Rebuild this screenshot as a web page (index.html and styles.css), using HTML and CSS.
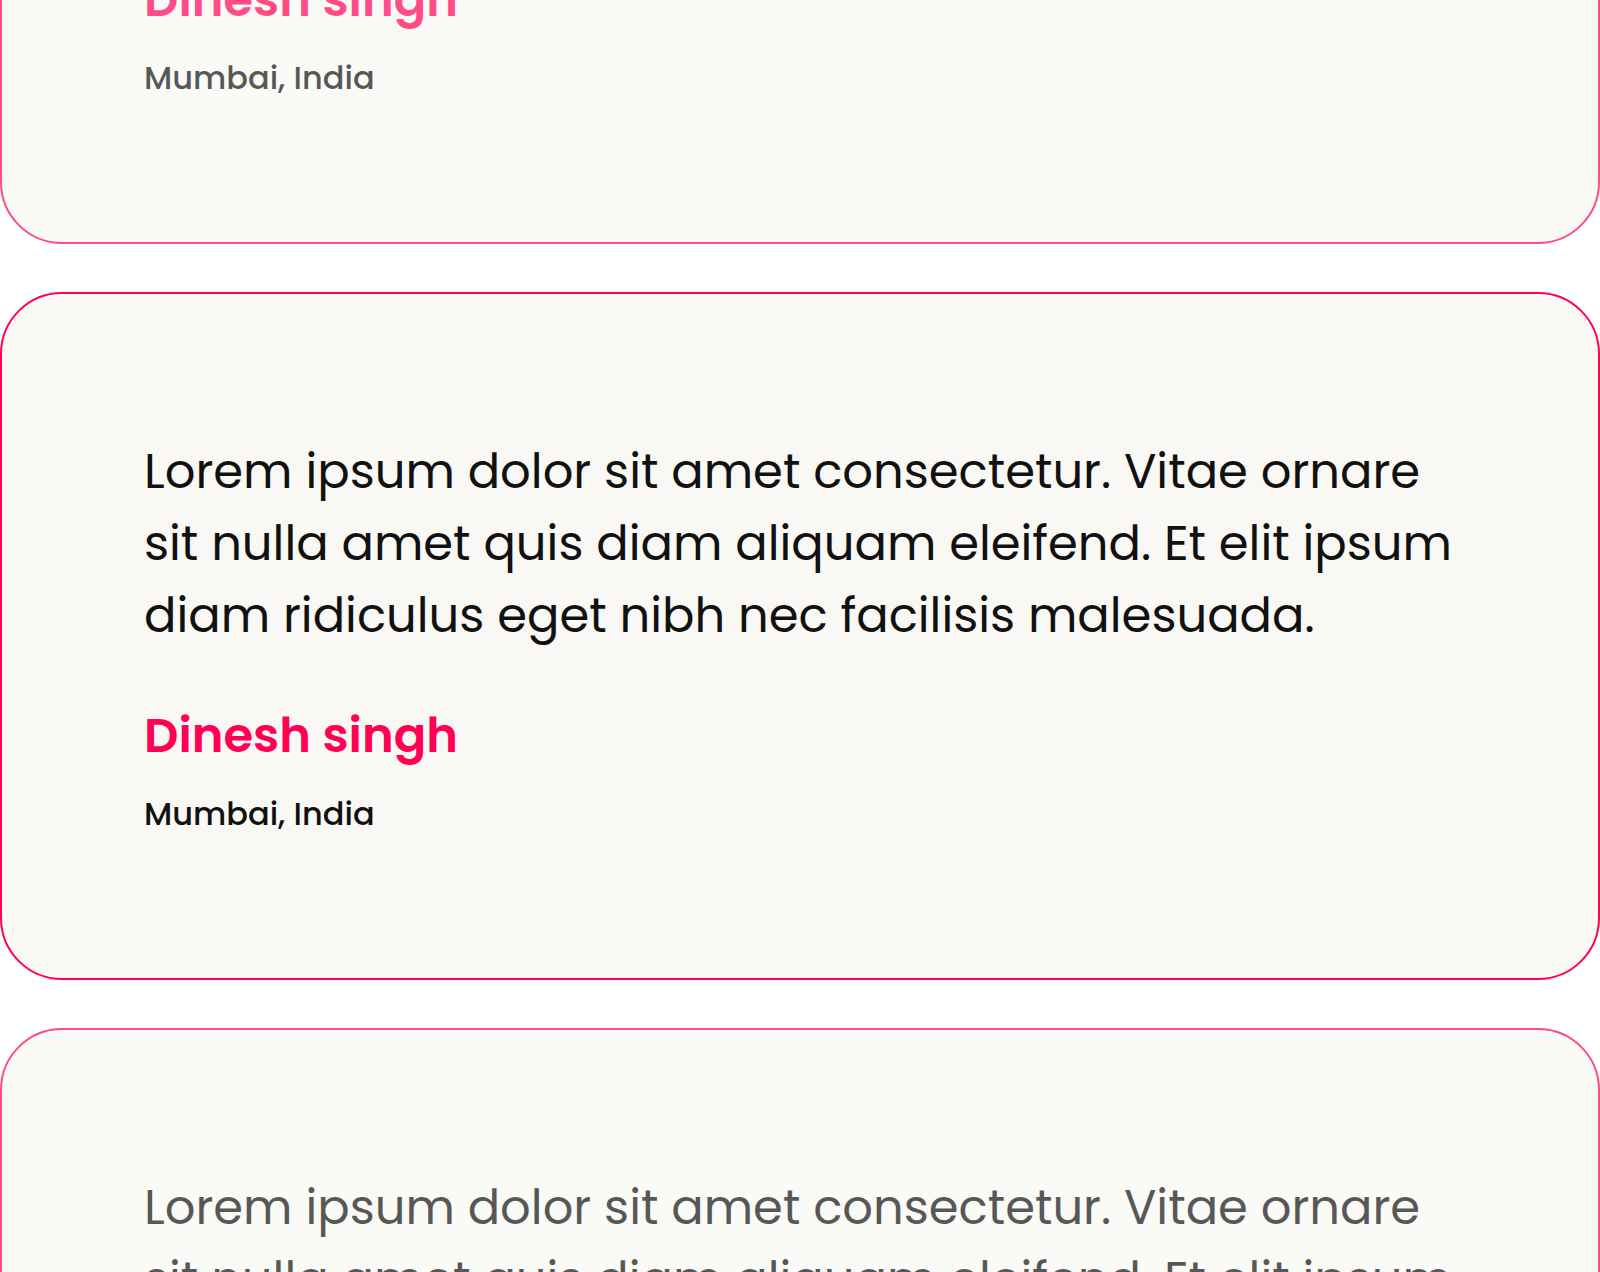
FILE: index.html
```html
<!DOCTYPE html>
<html lang="en">
<head>
<meta charset="utf-8">
<title>Testimonials</title>
<link rel="stylesheet" href="styles.css">
</head>
<body>
<section class="testimonials">
  <div class="track">
    <article class="card card-dim">
      <p class="quote">Lorem ipsum dolor sit amet consectetur. Vitae ornare sit nulla amet quis diam aliquam eleifend. Et elit ipsum diam ridiculus eget nibh nec facilisis malesuada.</p>
      <h3 class="name">Dinesh singh</h3>
      <p class="place">Mumbai, India</p>
    </article>
    <article class="card">
      <p class="quote">Lorem ipsum dolor sit amet consectetur. Vitae ornare sit nulla amet quis diam aliquam eleifend. Et elit ipsum diam ridiculus eget nibh nec facilisis malesuada.</p>
      <h3 class="name">Dinesh singh</h3>
      <p class="place">Mumbai, India</p>
    </article>
    <article class="card card-dim">
      <p class="quote">Lorem ipsum dolor sit amet consectetur. Vitae ornare sit nulla amet quis diam aliquam eleifend. Et elit ipsum diam ridiculus eget nibh nec facilisis malesuada.</p>
      <h3 class="name">Dinesh singh</h3>
      <p class="place">Mumbai, India</p>
    </article>
  </div>
</section>
</body>
</html>
```
FILE: styles.css
```css
html, body {
  margin: 0;
  padding: 0;
  background: #ffffff;
}

body {
  font-family: "Poppins", "Open Sans", "Liberation Sans", sans-serif;
  color: #111111;
  overflow: hidden;
}

.testimonials {
  height: 1272px;
  overflow: hidden;
}

.track {
  display: flex;
  flex-direction: column;
  gap: 48px;
  margin-top: -444px;
}

.card {
  box-sizing: border-box;
  border: 2px solid #ff0055;
  border-radius: 62px;
  background: #f9f8f5;
  padding: 142px 142px 140px 142px;
}

.card-dim {
  opacity: 0.7;
}

.quote {
  margin: 0;
  font-size: 48px;
  line-height: 72px;
  font-weight: 400;
  color: #111111;
}

.name {
  margin: 52px 0 0 0;
  font-size: 48px;
  line-height: 64px;
  font-weight: 600;
  color: #ff0055;
}

.place {
  margin: 22px 0 0 0;
  font-size: 32px;
  line-height: 48px;
  font-weight: 500;
  color: #111111;
}
```
